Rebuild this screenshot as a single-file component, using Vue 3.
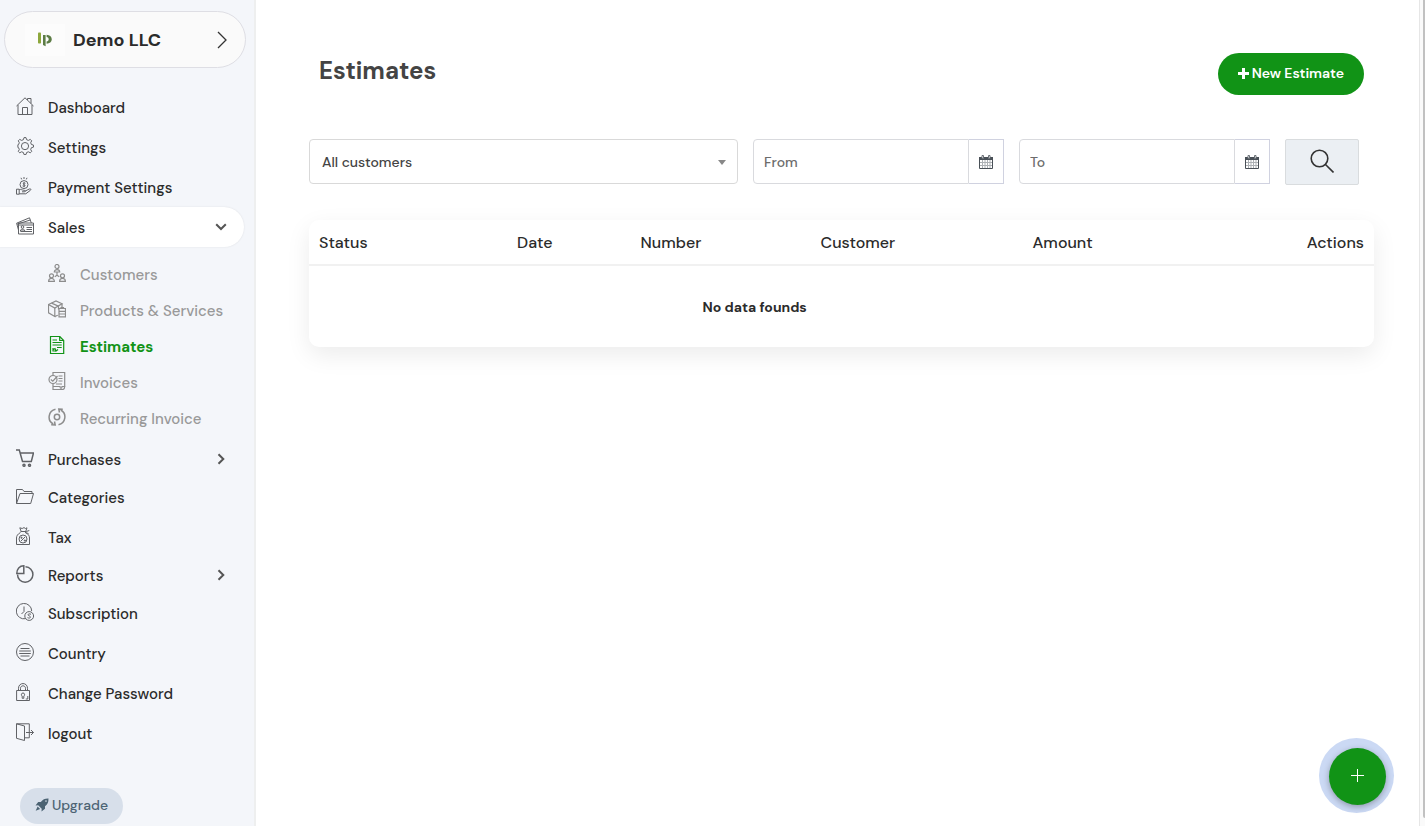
<template>
  <div class="app">
    <aside class="sidebar">
      <button type="button" class="company">
        <span class="company-logo">
          <svg width="14" height="15" viewBox="0 0 14 15">
            <rect x="0" y="0.5" width="3" height="11" rx="0.8" fill="#8da73c" />
            <path d="M5 3h2.600v11.200L5 13z" fill="#5c7c45" />
            <path d="M8.600 2.800c3 .3 5.200 1.800 5.200 4.400s-2.200 4.300-5.200 4.600V9.600c1.400-.3 2.100-1.200 2.100-2.400s-.7-2-2.100-2.300z" fill="#5c7c45" />
          </svg>
        </span>
        <span class="company-name">Demo LLC</span>
        <svg class="company-arrow" width="10" height="18" viewBox="0 0 10 18">
          <path d="M1 1l8 8-8 8" />
        </svg>
      </button>

      <nav class="nav">
        <template v-for="item in menu" :key="item.label">
          <a href="#" class="nav-item" :class="{ open: item.open, group: item.closed }">
            <svg class="icon" width="18" height="18" viewBox="0 0 18 18">
              <path v-for="(d, i) in icons[item.icon]" :key="i" :d="d" :class="{ bold: item.bold }" />
            </svg>
            <span class="nav-label">{{ item.label }}</span>
            <svg v-if="item.open" class="chevron" width="12" height="8" viewBox="0 0 12 8">
              <path d="M1.200 1.200L6 6l4.800-4.800" />
            </svg>
            <svg v-if="item.closed" class="chevron" width="12" height="12" viewBox="0 0 12 12">
              <path d="M3.500 1.200L8.300 6l-4.800 4.800" />
            </svg>
          </a>
          <div v-if="item.children" class="subnav">
            <a
              v-for="child in item.children"
              :key="child.label"
              href="#"
              class="sub-item"
              :class="{ active: child.active }"
            >
              <svg class="icon" width="18" height="18" viewBox="0 0 18 18">
                <path v-for="(d, i) in icons[child.icon]" :key="i" :d="d" :class="{ bold: child.bold }" />
              </svg>
              <span class="nav-label">{{ child.label }}</span>
            </a>
          </div>
        </template>
      </nav>

      <button type="button" class="upgrade">
        <svg width="14" height="14" viewBox="0 0 14 14">
          <path
            fill-rule="evenodd"
            d="M13.500.5c-3.600-.1-5.700.8-7.700 3.500H3.200L.5 7.500l2.700-.2 3.500 3.500-.2 2.700L10 10.800V8.200c2.700-2 3.600-4.100 3.500-7.700zM11 2.300a.8.8 0 1 1 0 1.600.8.8 0 0 1 0-1.600z"
          />
          <path d="M2.600 8.500L.7 12.800l4.500-1.800z" />
        </svg>
        Upgrade
      </button>
    </aside>

    <main class="main">
      <header class="page-head">
        <h1>Estimates</h1>
        <button type="button" class="btn-new">
          <svg width="11" height="11" viewBox="0 0 11 11">
            <path d="M5.500 0v11M0 5.500h11" />
          </svg>
          New Estimate
        </button>
      </header>

      <form class="filters" @submit.prevent>
        <div class="customer">
          <select v-model="customer" aria-label="Customer">
            <option value="all">All customers</option>
          </select>
          <span class="caret"></span>
        </div>
        <div v-for="field in dateFields" :key="field" class="date-field">
          <input v-model="dates[field]" type="text" :placeholder="field" :aria-label="field" />
          <button type="button" :aria-label="field + ' calendar'">
            <svg width="14" height="14" viewBox="0 0 14 14">
              <path d="M3.500 5v8M6 5v8M8.500 5v8M11 5v8M1 7.500h12M1 10.500h12" class="cal-grid" />
              <path d="M.5 2.500h13v11H.5z" class="cal-frame" />
              <path d="M0 2h14v3H0z" class="cal-top" />
              <path d="M3 .5h1.500v3H3zM9.500.5H11v3H9.500z" class="cal-ring" />
            </svg>
          </button>
        </div>
        <button type="submit" class="btn-search" aria-label="Search">
          <svg width="24" height="24" viewBox="0 0 24 24">
            <circle cx="9.500" cy="9.500" r="8.300" />
            <path d="M15.500 15.500l8 8" />
          </svg>
        </button>
      </form>

      <div class="card">
        <table>
          <thead>
            <tr>
              <th v-for="col in columns" :key="col.label" :style="{ width: col.width + '%' }">{{ col.label }}</th>
            </tr>
          </thead>
          <tbody>
            <tr>
              <td colspan="5">No data founds</td>
              <td></td>
            </tr>
          </tbody>
        </table>
      </div>
    </main>

    <div class="rail"><div class="thumb"></div></div>

    <button type="button" class="fab" aria-label="Add">
      <svg width="13" height="13" viewBox="0 0 13 13">
        <path d="M6.500 0v13M0 6.500h13" />
      </svg>
    </button>
  </div>
</template>

<script setup>
import { ref, reactive } from 'vue';

const customer = ref('all');
const dateFields = ['From', 'To'];
const dates = reactive({ From: '', To: '' });

const columns = [
  { label: 'Status', width: 18.6 },
  { label: 'Date', width: 11.6 },
  { label: 'Number', width: 16.9 },
  { label: 'Customer', width: 19.9 },
  { label: 'Amount', width: 16.7 },
  { label: 'Actions', width: 16.3 },
];

const menu = [
  { label: 'Dashboard', icon: 'home' },
  { label: 'Settings', icon: 'gear' },
  { label: 'Payment Settings', icon: 'payment' },
  {
    label: 'Sales',
    icon: 'sales',
    open: true,
    children: [
      { label: 'Customers', icon: 'people' },
      { label: 'Products & Services', icon: 'box' },
      { label: 'Estimates', icon: 'estimate', active: true },
      { label: 'Invoices', icon: 'invoice' },
      { label: 'Recurring Invoice', icon: 'recurring', bold: true },
    ],
  },
  { label: 'Purchases', icon: 'cart', closed: true, bold: true },
  { label: 'Categories', icon: 'folder' },
  { label: 'Tax', icon: 'tax' },
  { label: 'Reports', icon: 'pie', closed: true, bold: true },
  { label: 'Subscription', icon: 'clock' },
  { label: 'Country', icon: 'lines' },
  { label: 'Change Password', icon: 'lock' },
  { label: 'logout', icon: 'door' },
];

const icons = {
  home: ['M.5 9L9 .8 17.500 9', 'M2 8v9.500h14V8', 'M6.500 17.500v-7h5v7', 'M11.500 3V1.500h3.500v5'],
  gear: [
    'M7.400 2.700L8 .6h2l.6 2.100 1.800.7 1.900-1 1.400 1.400-1 1.900.7 1.800 2.100.6v2l-2.100.6-.7 1.800 1 1.900-1.400 1.400-1.900-1-1.800.7-.6 2.100H8l-.6-2.100-1.800-.7-1.900 1-1.400-1.400 1-1.900-.7-1.800-.7-.2v-2.800l.7-.2.7-1.800-1-1.900 1.400-1.400 1.900 1z',
    'M9 5.500a3.600 3.600 0 1 0 0 7.200 3.600 3.600 0 0 0 0-7.200z',
  ],
  payment: [
    'M8 3.600a4 4 0 1 0 0 8 4 4 0 0 0 0-8z',
    'M9.400 6.300C7.600 5.300 6.300 7 8 7.600s1.500 2.400-1.400 1.300M8 5v5.200',
    'M8 0v2M5 .8l.7 1.600M11 .8l-.7 1.600',
    'M.5 12.200h2.700v5H.5z',
    'M3.200 12.700c2-.8 3 .6 5 .6 1.800 0 1.800 1.500 0 1.500H6M9.300 14l4-2c1.400-.5 2.200.4 1 1.400l-4.500 3.400H3.200',
  ],
  sales: [
    'M2.500 6h15v11h-15z',
    'M2.500 13L.6 6.200 13.500.8 15.300 6',
    'M1 7.200L14.300 3M2.500 8h15',
    'M6.500 8.700a1.300 1.300 0 1 0 0 2.600 1.300 1.300 0 0 0 0-2.600zM4.500 14v-1l1.300-.8h1.500l1.300.8v1z',
    'M10.500 10.500h5.500M10.500 12.500h5.500M4.500 14.500h11.500',
  ],
  people: [
    'M9 .5a2 2 0 1 0 0 4 2 2 0 0 0 0-4zM6.300 8c0-3.300 5.400-3.300 5.400 0z',
    'M3.500 9.800a2 2 0 1 0 0 4 2 2 0 0 0 0-4zM.6 17.400c0-4 5.800-4 5.800 0z',
    'M14.500 9.800a2 2 0 1 0 0 4 2 2 0 0 0 0-4zM11.600 17.400c0-4 5.800-4 5.800 0z',
    'M9 8v3.500M9 11.300l-2.300 1.500M9 11.300l2.300 1.500',
  ],
  box: [
    'M.5 4.500L8 1l6 2.700L6.800 8z',
    'M.5 4.500v8.300l6.300 3.700V8M14 3.700v4',
    'M3.500 3.100l7 3v3.500',
    'M6.800 16.500l3-1.300',
    'M11 8.500h6.500v8.300H11zM11 11.300h6.500M11 14h6.500M13 8.500v-1h2.500v1',
  ],
  estimate: [
    'M2.500.5h9.200l4 4v13H2.500z',
    'M11.700.5v4h4',
    'M4.500 4h4.500M4.500 6.500h9.200M4.500 9h9.200M9 11.500h4.700',
    'M5 12v3h4M5 13.800l2-1.200L8 15l2-1.500',
  ],
  invoice: [
    'M5 3.500V.5h11.700v14',
    'M5 11.500v6h9.500c2 0 2.200-1.500 2.200-3H14c0 2.500-2 2.500-2 0H5',
    'M5 3.500a4 4 0 1 0 0 8 4 4 0 0 0 0-8z',
    'M2.800 7.500l2 1.700L9.500 4',
    'M10.500 4h4M10.500 6.500h4M10.500 9h4M8 12h6',
  ],
  recurring: [
    'M7.500 1.200A8 8 0 0 0 5.200 16',
    'M10.500 16.800A8 8 0 0 0 12.800 2',
    'M3.200 16.800l4 .2-.7-3.500M14.800 1.200l-4-.2.7 3.500',
    'M9 6.300a2.700 2.700 0 1 0 0 5.400 2.700 2.700 0 0 0 0-5.400z',
  ],
  cart: [
    'M0 1h3.300l3.200 11.500h8.800L17.500 4H4.200',
    'M8 15.300a1 1 0 1 0 0 2 1 1 0 0 0 0-2zM13.500 15.300a1 1 0 1 0 0 2 1 1 0 0 0 0-2z',
  ],
  folder: ['M.5 16.500v-14h6l1.500 2h8v2', 'M.5 16.500L4 6.500h13.500l-2.800 10z'],
  tax: [
    'M5 4L3.800.8l2.400.7L8 .6l1.500.9 1.500-.7-1.200 3.400',
    'M4.500 4.500h5.800l3-1M9 5.500l3.500 1',
    'M4.500 5.500C1.500 7.200.5 9 .5 11v6.500h13V11c0-2-1-3.800-4-5.500',
    'M7 8a4 4 0 1 0 0 8 4 4 0 0 0 0-8z',
    'M5 14l4-4M5 10.200h1v1H5zM8.300 13h1v1h-1z',
  ],
  pie: ['M9.500 1.800a7.700 7.700 0 1 1-8 7.700', 'M7.800.8v7.700H.8C.8 4 3.500.8 7.800.8z'],
  clock: [
    'M9.500 15.700A7.700 7.700 0 1 1 15.700 8',
    'M8 3.500v5L5.500 11',
    'M13.200 8.600a4.400 4.400 0 1 0 0 8.800 4.400 4.400 0 0 0 0-8.800z',
    'M15 11.300c-2.500-1.200-4 .5-2 1.500 2.600.7 1.500 3.300-1.500 1.800',
  ],
  lines: ['M9 .5a8.500 8.500 0 1 0 0 17 8.500 8.500 0 0 0 0-17z', 'M4.500 5.500h9M3.200 8h11.600M3.200 10.500h11.600M4.500 13h9'],
  lock: [
    'M.6 7.500h12.900v10H.6z',
    'M2.500 7.500V5.300c0-6.300 9-6.300 9 0v2.200',
    'M4.500 7.500V5.300c0-3.300 5-3.300 5 0v2.200',
    'M7 10a1.600 1.600 0 0 0-.8 3v2.300h1.600V13A1.600 1.600 0 0 0 7 10z',
    'M11.800 13v3h-2',
  ],
  door: ['M.5.8h12.800v14H8.500', 'M.5.8L8.500 3v14.500l-8-2.200z', 'M10 9.500h7.500M15 7l2.500 2.500L15 12'],
};
</script>

<style>
body {
  margin: 0;
}
</style>

<style scoped>
.app {
  display: flex;
  min-height: 100vh;
  background: #fff;
  color: #2b2b2b;
  font-family: 'DM Sans', Inter, 'Liberation Sans', sans-serif;
  font-size: 15px;
}

.app * {
  box-sizing: border-box;
}

button,
input,
select {
  font: inherit;
  color: inherit;
  margin: 0;
}

button {
  cursor: pointer;
}

svg {
  flex: none;
  fill: none;
}

a {
  color: inherit;
  text-decoration: none;
}

.sidebar {
  width: 256px;
  flex: none;
  background: #f4f6fa;
  border-right: 2px solid #eeefef;
  padding-top: 11px;
}

.company {
  display: flex;
  align-items: center;
  width: 242px;
  height: 57px;
  margin-left: 4px;
  padding: 0 18px 0 20px;
  border: 1px solid #dedee4;
  border-radius: 29px;
  background: #fafafa;
}

.company-logo {
  display: flex;
  align-items: center;
  justify-content: center;
  width: 40px;
  height: 32px;
  background: #fcfcfc;
}

.company-name {
  flex: 1;
  margin-left: 8px;
  text-align: left;
  font-size: 18px;
  font-weight: 700;
}

.company-arrow {
  stroke: #333;
  stroke-width: 1.3;
}

.nav {
  margin-top: 19px;
}

.nav-item {
  display: flex;
  align-items: center;
  height: 40px;
  padding: 0 17px 0 16px;
  margin-right: 10px;
  font-weight: 500;
}

.nav-item.open {
  background: #fff;
  border-radius: 0 20px 20px 0;
  box-shadow: 0 0 2px rgba(0, 0, 0, 0.1);
}

.nav-item.group {
  height: 36px;
}

.nav-label {
  flex: 1;
  padding-top: 2px;
}

.icon {
  margin: 0 14px 2px 0;
  stroke: #606266;
  stroke-width: 1;
}

.icon .bold {
  stroke-width: 1.5;
}

.chevron {
  stroke: #555;
  stroke-width: 2;
}

.subnav {
  padding: 9px 0 5px;
}

.sub-item {
  display: flex;
  align-items: center;
  height: 36px;
  padding-left: 48px;
  color: #999;
  font-weight: 500;
}

.sub-item .icon {
  stroke: #8c8c8c;
  stroke-width: 1.2;
}

.sub-item.active {
  color: #119316;
  font-weight: 700;
}

.sub-item.active .icon {
  stroke: #119316;
}

.upgrade {
  display: flex;
  align-items: center;
  gap: 3px;
  height: 36px;
  margin: 35px 0 2px 20px;
  padding: 0 15px 2px;
  border: 0;
  border-radius: 18px;
  background: #d7dfea;
  color: #4c6373;
  font-size: 14px;
  font-weight: 500;
}

.upgrade svg {
  fill: #4c6373;
}

.main {
  flex: 1;
  min-width: 0;
  padding: 53px 45px 40px 53px;
}

.page-head {
  display: flex;
  justify-content: space-between;
  padding: 0 10px;
}

h1 {
  margin: 0;
  color: #444;
  font-size: 24px;
  line-height: 36px;
  font-weight: 700;
}

.btn-new {
  display: flex;
  align-items: center;
  gap: 3px;
  height: 42px;
  padding: 0 20px 2px;
  border: 0;
  border-radius: 21px;
  background: #119316;
  color: #fff;
  font-size: 14px;
  font-weight: 600;
}

.btn-new svg {
  stroke: #fff;
  stroke-width: 3;
}

.filters {
  display: flex;
  gap: 15px;
  margin-top: 44px;
  padding-right: 15px;
  font-size: 14px;
  font-weight: 500;
}

.customer {
  position: relative;
  flex: 429;
}

.customer select {
  width: 100%;
  height: 45px;
  padding: 0 12px;
  border: 1px solid #d9d9d9;
  border-radius: 4px;
  background: #fff;
  color: #444;
  appearance: none;
}

.caret {
  position: absolute;
  top: 21px;
  right: 12px;
  border: 4px solid transparent;
  border-top: 5px solid #888;
  border-bottom: 0;
  pointer-events: none;
}

.date-field {
  display: flex;
  flex: 251;
  height: 45px;
  min-width: 0;
}

.date-field input {
  flex: 1;
  min-width: 0;
  padding: 0 10px;
  border: 1px solid #d9dade;
  border-radius: 4px 0 0 4px;
  background: #fff;
}

.date-field input::placeholder {
  color: #6c6c6c;
  opacity: 1;
}

.date-field button {
  display: flex;
  align-items: center;
  justify-content: center;
  width: 35px;
  padding: 0;
  border: 1px solid #d0d2e0;
  border-left: 0;
  background: #fff;
}

.cal-frame {
  stroke: #495057;
}

.cal-top {
  fill: #495057;
}

.cal-grid {
  stroke: #adb1b5;
}

.cal-ring {
  fill: #fff;
  stroke: #6b7177;
}

.btn-search {
  display: flex;
  align-items: center;
  justify-content: center;
  flex: none;
  width: 74px;
  height: 46px;
  padding: 0 0 2px;
  border: 1px solid #d9dcde;
  border-radius: 2px;
  background: #ebeff3;
}

.btn-search svg {
  stroke: #333;
  stroke-width: 1.6;
}

.card {
  margin-top: 35px;
  border-radius: 10px;
  background: #fff;
  box-shadow: 0 8px 24px rgba(0, 0, 0, 0.08);
}

table {
  width: 100%;
  border-collapse: collapse;
  table-layout: fixed;
}

th {
  height: 45px;
  padding: 0 10px;
  border-bottom: 2px solid #f1f1f1;
  text-align: left;
  font-size: 16px;
  font-weight: 500;
}

th:last-child {
  text-align: right;
}

td {
  height: 82px;
  padding: 0 10px;
  text-align: center;
  font-size: 14px;
  font-weight: 700;
}

.rail {
  display: flex;
  justify-content: flex-end;
  width: 6px;
  flex: none;
  padding-bottom: 8px;
  border-left: 1px solid #e6e6e6;
  background: #fafafa;
}

.thumb {
  width: 2px;
  border-radius: 0 0 0 2px;
  background: #c1c1c1;
}

.fab {
  position: fixed;
  right: 39px;
  bottom: 21px;
  display: flex;
  align-items: center;
  justify-content: center;
  width: 57px;
  height: 57px;
  padding: 0 0 2px;
  border: 0;
  border-radius: 50%;
  background: #119316;
  box-shadow: 0 2px 6px rgba(0, 0, 0, 0.3), -1px -1px 0 9px #cbd9f4;
}

.fab svg {
  stroke: #fff;
  stroke-width: 1;
}
</style>
